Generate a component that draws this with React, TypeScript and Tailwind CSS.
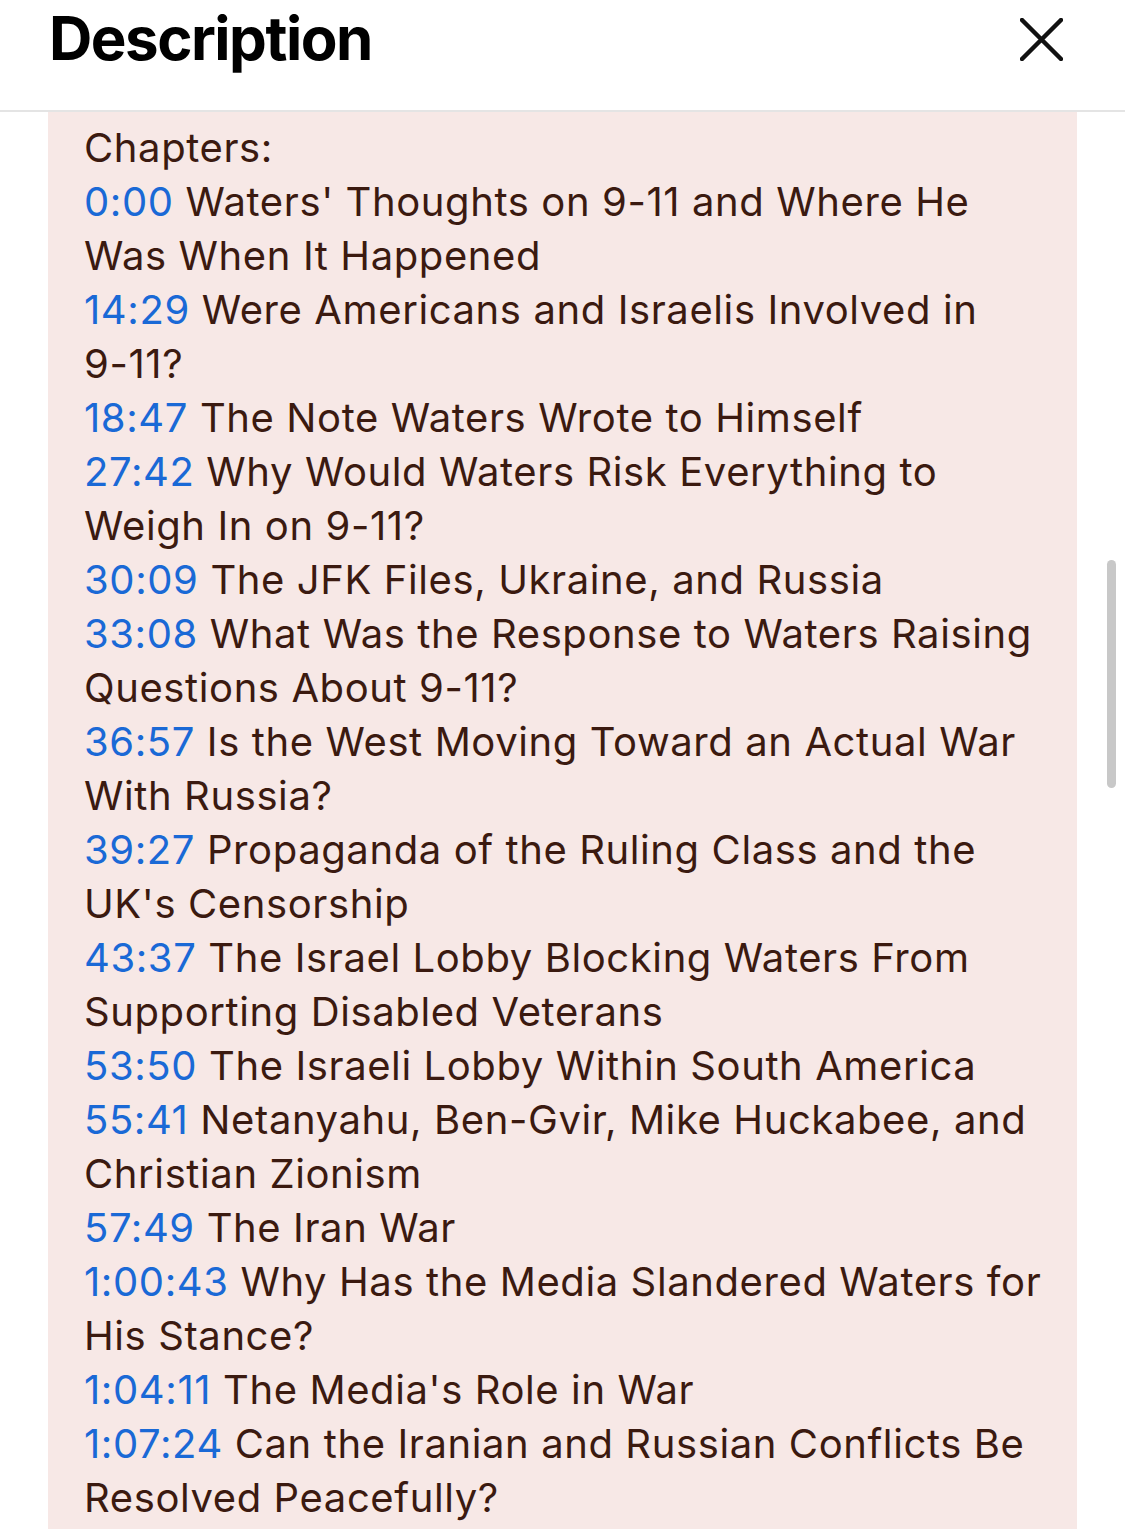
const chapters: { t: string; lines: string[] }[] = [
  { t: "0:00", lines: ["Waters' Thoughts on 9-11 and Where He", "Was When It Happened"] },
  { t: "14:29", lines: ["Were Americans and Israelis Involved in", "9-11?"] },
  { t: "18:47", lines: ["The Note Waters Wrote to Himself"] },
  { t: "27:42", lines: ["Why Would Waters Risk Everything to", "Weigh In on 9-11?"] },
  { t: "30:09", lines: ["The JFK Files, Ukraine, and Russia"] },
  { t: "33:08", lines: ["What Was the Response to Waters Raising", "Questions About 9-11?"] },
  { t: "36:57", lines: ["Is the West Moving Toward an Actual War", "With Russia?"] },
  { t: "39:27", lines: ["Propaganda of the Ruling Class and the", "UK's Censorship"] },
  { t: "43:37", lines: ["The Israel Lobby Blocking Waters From", "Supporting Disabled Veterans"] },
  { t: "53:50", lines: ["The Israeli Lobby Within South America"] },
  { t: "55:41", lines: ["Netanyahu, Ben-Gvir, Mike Huckabee, and", "Christian Zionism"] },
  { t: "57:49", lines: ["The Iran War"] },
  { t: "1:00:43", lines: ["Why Has the Media Slandered Waters for", "His Stance?"] },
  { t: "1:04:11", lines: ["The Media's Role in War"] },
  { t: "1:07:24", lines: ["Can the Iranian and Russian Conflicts Be", "Resolved Peacefully?"] },
];

export default function App() {
  return (
    <div className="relative w-[1125px] h-[1529px] overflow-hidden bg-white font-['Inter',sans-serif]">
      <div className="h-[112px] flex items-start justify-between pl-[49px] pr-[62px] border-b-2 border-[#e4e4e4]">
        <h1 className="mt-[2px] text-[60px] leading-[72px] font-bold tracking-[-0.025em] text-black">
          Description
        </h1>
        <button className="mt-[18px] w-[43px] h-[43px] flex">
          <svg viewBox="0 0 43 43" width="43" height="43">
            <path d="M2 2 L41 41 M41 2 L2 41" stroke="#111" strokeWidth="4.5" strokeLinecap="round" />
          </svg>
        </button>
      </div>
      <div className="ml-[48px] w-[1029px] bg-[#f7e8e6] pl-[36px] pt-[9px] pb-6 text-[40px] leading-[54px] text-[#3b1a10] tracking-[0.015em]">
        <div>Chapters:</div>
        {chapters.map((c) => (
          <div key={c.t}>
            {c.lines.map((l, i) => (
              <div key={i} className="whitespace-nowrap">
                {i === 0 && <span className="text-[#1a69d6]">{c.t}</span>}
                {i === 0 ? " " : ""}
                {l}
              </div>
            ))}
          </div>
        ))}
      </div>
      {/* scroll indicator */}
      <div className="absolute left-[1107px] top-[560px] w-[9px] h-[228px] rounded-full bg-[#c8c8c8]" />
    </div>
  );
}
